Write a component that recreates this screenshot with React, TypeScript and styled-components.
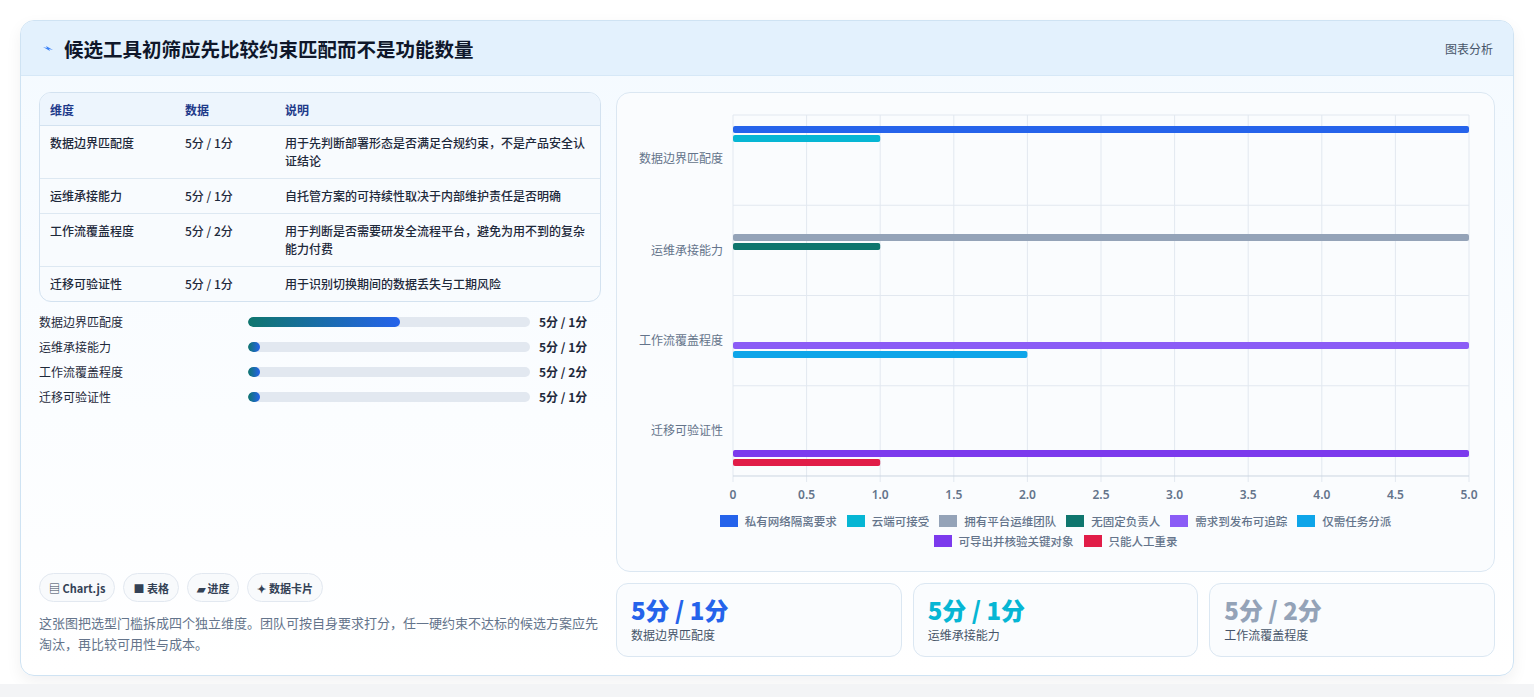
import React from "react";
import styled, { createGlobalStyle } from "styled-components";

const Global = createGlobalStyle`
  html, body { margin: 0; padding: 0; background: #f3f4f6; }
  body { font-family: "Noto Sans CJK SC", "Noto Sans", sans-serif; color: #0f172a; }
  * { box-sizing: border-box; }
`;

const Page = styled.div`
  background: #fff;
  padding: 20px 20px 0 20px;
  height: 684px;
`;
const Card = styled.div`
  height: 656px;
  border: 1px solid #cfe3f3;
  border-radius: 14px;
  background: linear-gradient(180deg, #f4faff 0%, #fbfdff 60%, #fff 100%);
  box-shadow: 0 6px 16px rgba(15, 23, 42, 0.06);
  overflow: hidden;
  display: flex;
  flex-direction: column;
`;
const Header = styled.div`
  height: 55px;
  background: #e3f1fd;
  border-bottom: 1px solid #d6e8f7;
  display: flex;
  align-items: center;
  padding: 0 20px 0 21px;
  gap: 10px;
`;
const Title = styled.h1`
  margin: 0;
  font-size: 19.5px;
  font-weight: 700;
  color: #0f172a;
  flex: 1;
`;
const HeaderTag = styled.span`
  font-size: 12px;
  color: #475569;
`;
const Body = styled.div`
  flex: 1;
  display: grid;
  grid-template-columns: 562px 879px;
  gap: 15px;
  padding: 16px 18px 18px 18px;
`;
const Left = styled.div`
  display: flex;
  flex-direction: column;
`;
const Table = styled.table`
  width: 100%;
  border-collapse: separate;
  border-spacing: 0;
  border: 1px solid #d3e2f0;
  border-radius: 12px;
  overflow: hidden;
  font-size: 12px;
  background: #f8fbfe;
`;
const Th = styled.th<{ w?: number }>`
  text-align: left;
  font-weight: 600;
  color: #1e3a8a;
  background: #edf5fd;
  height: 33px;
  padding: 0 10px;
  width: ${(p) => (p.w ? p.w + "px" : "auto")};
  border-bottom: 1px solid #d3e2f0;
`;
const Td = styled.td`
  padding: 8px 10px;
  vertical-align: top;
  line-height: 18px;
  color: #1e293b;
  font-weight: 500;
  tr:not(:last-child) > & { border-bottom: 1px solid #dde8f2; }
`;
const Bars = styled.div`
  display: flex;
  flex-direction: column;
  gap: 6px;
  margin-top: 10px;
`;
const BarRow = styled.div`
  display: grid;
  grid-template-columns: 200px 282px auto;
  align-items: center;
  gap: 0 9px;
  font-size: 12px;
  height: 19px;
  color: #1e293b;
`;
const Track = styled.div`
  height: 10px;
  border-radius: 5px;
  background: #e2e8f0;
  overflow: hidden;
`;
const Fill = styled.div`
  height: 100%;
  min-width: 12px;
  border-radius: 5px;
  background: linear-gradient(90deg, #0f766e, #2563eb);
`;
const BarValue = styled.span`
  font-weight: 700;
`;
const Spacer = styled.div`flex: 1;`;
const Tags = styled.div`
  display: flex;
  gap: 8px;
`;
const Tag = styled.span`
  height: 29px;
  padding: 0 9px;
  border: 1px solid #e2e8f0;
  border-radius: 15px;
  background: #f8fafc;
  font-size: 11px;
  font-weight: 600;
  color: #334155;
  display: inline-flex;
  align-items: center;
`;
const Desc = styled.p`
  margin: 10px 0 3px 0;
  font-size: 13px;
  line-height: 21px;
  color: #64748b;
`;
const Right = styled.div`
  display: flex;
  flex-direction: column;
  gap: 11px;
`;
const ChartPanel = styled.div`
  height: 480px;
  border: 1px solid #dbe7f2;
  border-radius: 14px;
  background: #fafcfe;
  display: flex;
  flex-direction: column;
`;
const Legend = styled.div`
  display: flex;
  flex-wrap: wrap;
  justify-content: center;
  gap: 4px 10px;
  padding: 2px 80px 0;
  font-size: 11.5px;
  font-weight: 500;
  color: #64748b;
`;
const LegendItem = styled.span`
  display: inline-flex;
  align-items: center;
  gap: 7px;
`;
const Swatch = styled.i<{ c: string }>`
  width: 18px;
  height: 12px;
  background: ${(p) => p.c};
`;
const Stats = styled.div`
  display: grid;
  grid-template-columns: repeat(3, 1fr);
  gap: 11px;
`;
const Stat = styled.div`
  height: 74px;
  border: 1px solid #dbe7f2;
  border-radius: 12px;
  background: #fafcfe;
  padding: 10px 14px;
`;
const StatValue = styled.div<{ c: string }>`
  font-size: 24px;
  font-weight: 800;
  line-height: 32px;
  color: ${(p) => p.c};
`;
const StatLabel = styled.div`
  font-size: 12px;
  color: #475569;
`;

const rows = [
  ["数据边界匹配度", "5分 / 1分", "用于先判断部署形态是否满足合规约束，不是产品安全认证结论"],
  ["运维承接能力", "5分 / 1分", "自托管方案的可持续性取决于内部维护责任是否明确"],
  ["工作流覆盖程度", "5分 / 2分", "用于判断是否需要研发全流程平台，避免为用不到的复杂能力付费"],
  ["迁移可验证性", "5分 / 1分", "用于识别切换期间的数据丢失与工期风险"],
];
const legend: [string, string][] = [
  ["私有网络隔离要求", "#2563eb"],
  ["云端可接受", "#06b6d4"],
  ["拥有平台运维团队", "#94a3b8"],
  ["无固定负责人", "#0f766e"],
  ["需求到发布可追踪", "#8b5cf6"],
  ["仅需任务分派", "#0ea5e9"],
  ["可导出并核验关键对象", "#7c3aed"],
  ["只能人工重录", "#e11d48"],
];

const X0 = 116, X1 = 852, YT = 22, YB = 383;
const xs = (v: number) => X0 + ((X1 - X0) * v) / 5;
const bars = [
  { y: 33, v: 5, c: "#2563eb" }, { y: 42, v: 1, c: "#06b6d4" },
  { y: 141, v: 5, c: "#94a3b8" }, { y: 150, v: 1, c: "#0f766e" },
  { y: 249, v: 5, c: "#8b5cf6" }, { y: 258, v: 2, c: "#0ea5e9" },
  { y: 357, v: 5, c: "#7c3aed" }, { y: 366, v: 1, c: "#e11d48" },
];
const cats = [["数据边界匹配度", 66], ["运维承接能力", 158], ["工作流覆盖程度", 248], ["迁移可验证性", 338]] as const;

export default function App() {
  return (
    <Page>
      <Global />
      <Card>
        <Header>
          <svg width="12" height="10" viewBox="0 0 12 10"><path d="M1 4 L5 5 L4 3 L11 7 L7 6 L8 8 Z" fill="#3b82f6" /></svg>
          <Title>候选工具初筛应先比较约束匹配而不是功能数量</Title>
          <HeaderTag>图表分析</HeaderTag>
        </Header>
        <Body>
          <Left>
            <Table>
              <thead>
                <tr><Th w={135}>维度</Th><Th w={100}>数据</Th><Th>说明</Th></tr>
              </thead>
              <tbody>
                {rows.map((r) => (
                  <tr key={r[0]}><Td>{r[0]}</Td><Td>{r[1]}</Td><Td>{r[2]}</Td></tr>
                ))}
              </tbody>
            </Table>
            <Bars>
              {rows.map((r, i) => (
                <BarRow key={r[0]}>
                  <span>{r[0]}</span>
                  <Track><Fill style={{ width: i === 0 ? "54%" : "12px" }} /></Track>
                  <BarValue>{r[1]}</BarValue>
                </BarRow>
              ))}
            </Bars>
            <Spacer />
            <Tags>
              <Tag>▤ Chart.js</Tag>
              <Tag>■ 表格</Tag>
              <Tag>▰ 进度</Tag>
              <Tag>✦ 数据卡片</Tag>
            </Tags>
            <Desc>这张图把选型门槛拆成四个独立维度。团队可按自身要求打分，任一硬约束不达标的候选方案应先淘汰，再比较可用性与成本。</Desc>
          </Left>
          <Right>
            <ChartPanel>
              <svg width="879" height="418" viewBox="0 0 879 418">
                {Array.from({ length: 11 }, (_, i) => (
                  <line key={i} x1={xs(i / 2)} x2={xs(i / 2)} y1={YT} y2={YB + 6} stroke="#e2e8f0" />
                ))}
                {[0, 1, 2, 3, 4].map((i) => (
                  <line key={i} x1={X0} x2={X1} y1={YT + i * 90.25} y2={YT + i * 90.25} stroke={i === 4 ? "#cbd5e1" : "#e2e8f0"} />
                ))}
                {bars.map((b, i) => (
                  <rect key={i} x={X0} y={b.y} width={xs(b.v) - X0} height={7} rx={2} fill={b.c} />
                ))}
                {cats.map(([t, y]) => (
                  <text key={t} x={X0 - 10} y={y + 4} textAnchor="end" fontSize="12" fill="#64748b" fontFamily="Noto Sans CJK SC, sans-serif">{t}</text>
                ))}
                {Array.from({ length: 11 }, (_, i) => (
                  <text key={i} x={xs(i / 2)} y={406} textAnchor="middle" fontSize="12" fontWeight="600" fill="#64748b" fontFamily="Noto Sans, sans-serif">
                    {i === 0 ? "0" : (i / 2).toFixed(1)}
                  </text>
                ))}
              </svg>
              <Legend>
                {legend.map(([t, c]) => (
                  <LegendItem key={t}><Swatch c={c} />{t}</LegendItem>
                ))}
              </Legend>
            </ChartPanel>
            <Stats>
              <Stat><StatValue c="#2563eb">5分 / 1分</StatValue><StatLabel>数据边界匹配度</StatLabel></Stat>
              <Stat><StatValue c="#06b6d4">5分 / 1分</StatValue><StatLabel>运维承接能力</StatLabel></Stat>
              <Stat><StatValue c="#94a3b8">5分 / 2分</StatValue><StatLabel>工作流覆盖程度</StatLabel></Stat>
            </Stats>
          </Right>
        </Body>
      </Card>
    </Page>
  );
}
